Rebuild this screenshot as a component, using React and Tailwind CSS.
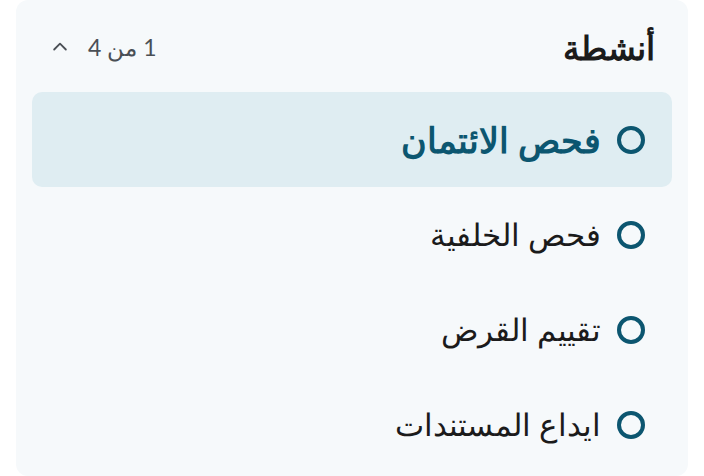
import React from 'react';

const items = [
  { label: 'فحص الائتمان', active: true },
  { label: 'فحص الخلفية' },
  { label: 'تقييم القرض' },
  { label: 'ايداع المستندات' },
];

function Circle() {
  return (
    <span className="shrink-0 w-[28px] h-[28px] rounded-full border-4 border-[#0c5670]"></span>
  );
}

export default function App() {
  return (
    <div className="w-[704px] h-[476px] bg-white px-4 font-['Lato','Noto_Sans',sans-serif]" dir="rtl">
      <div className="h-[476px] rounded-xl bg-[#f6f9fb] px-4 pt-[20px]">
        {/* Header */}
        <div className="flex items-center justify-between h-[54px] pr-[17px] pl-[18px]">
          <h2 className="text-[33px] leading-none font-bold text-[#1b1b1b]">أنشطة</h2>
          <div className="flex items-center gap-[18px] text-[#4a4f55]">
            <span className="text-[23px] leading-none">1 من 4</span>
            <svg width="20" height="20" viewBox="0 0 24 24" fill="none" stroke="#4a4f55" strokeWidth="2.2" strokeLinecap="round" strokeLinejoin="round">
              <path d="M5 15l7-7 7 7" />
            </svg>
          </div>
        </div>

        {/* List */}
        <ul className="mt-[18px]">
          {items.map((item, i) => (
            <li
              key={i}
              className={
                item.active
                  ? 'flex items-center gap-4 h-[95px] px-[27px] rounded-[10px] bg-[#dfedf2] text-[#0c5670] font-bold'
                  : 'flex items-center gap-4 h-[95px] px-[27px] text-[#1b1b1b]'
              }
            >
              <Circle />
              <span className={item.active ? 'text-[35px] leading-none' : 'text-[31px] leading-none'}>
                {item.label}
              </span>
            </li>
          ))}
        </ul>
      </div>
    </div>
  );
}
